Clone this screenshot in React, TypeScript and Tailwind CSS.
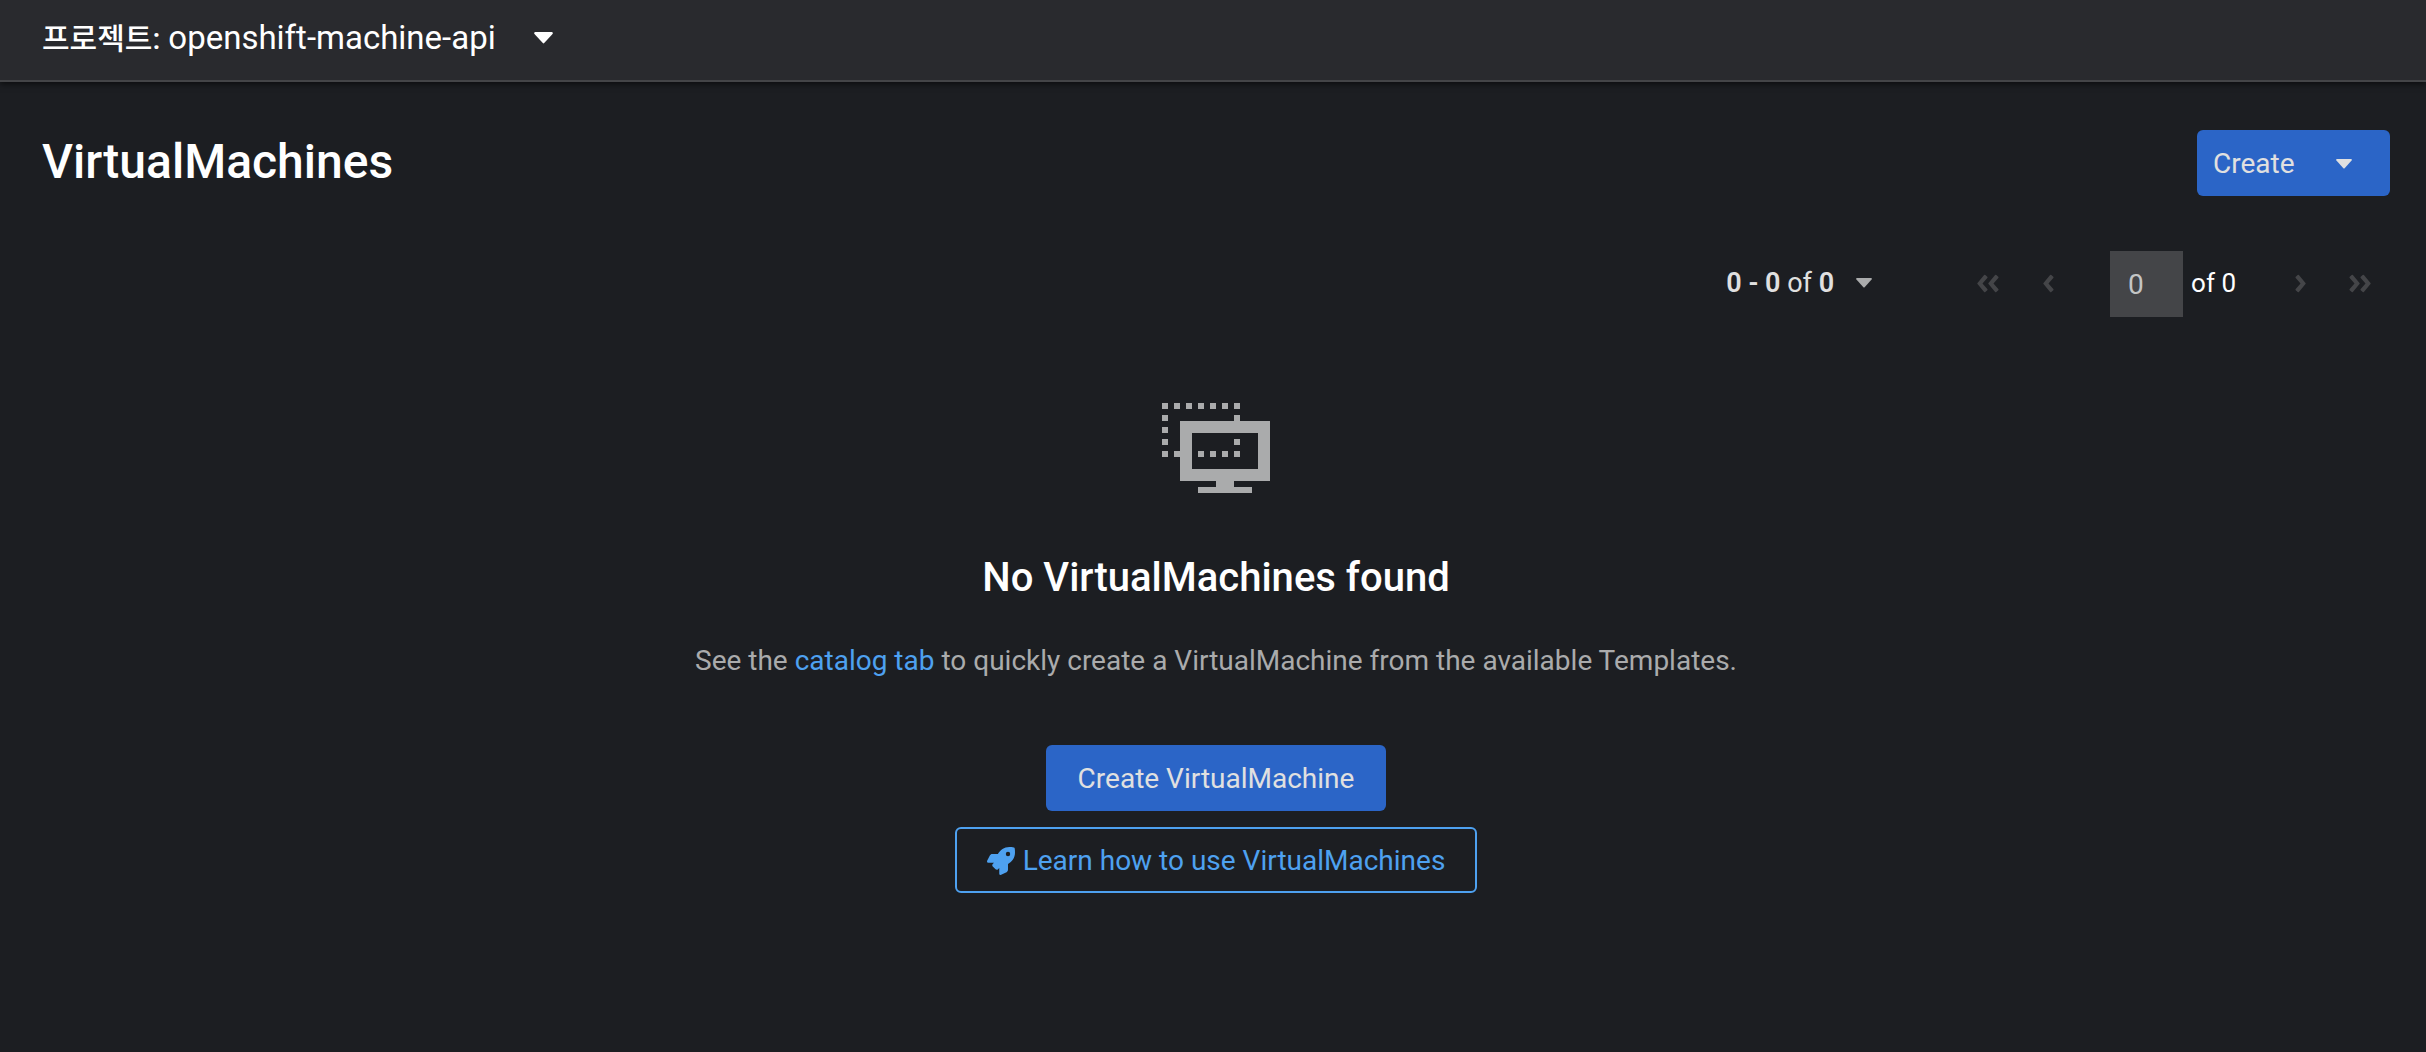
import type { ReactNode } from "react";
import { FaRocket } from "react-icons/fa";

function Caret({ className }: { className: string }) {
  return (
    <svg viewBox="0 0 16 10" fill="currentColor" aria-hidden="true" className={className}>
      <path d="M1 0H15Q16.4 .4 15.6 1.6L8.6 9.3Q8 9.9 7.4 9.3L.4 1.6Q-.4 .4 1 0Z" />
    </svg>
  );
}

const chevron = "M8.3 1 10.3 2.8Q10.9 3.4 10.3 4L5.5 9.5 10.3 15Q10.9 15.6 10.3 16.2L8.3 18Q7.7 18.5 7.1 18L.5 10.1Q0 9.5 .5 8.9L7.1 1Q7.7 .5 8.3 1Z";

function Chevron({ double = false, flip = false }: { double?: boolean; flip?: boolean }) {
  return (
    <svg
      viewBox={double ? "0 0 22 19" : "0 0 11 19"}
      fill="currentColor"
      aria-hidden="true"
      className={`h-[19px] ${double ? "w-[22px]" : "w-[11px]"} ${flip ? "rotate-180" : ""}`}
    >
      <path d={chevron} />
      {double && <path d={chevron} transform="translate(11 0)" />}
    </svg>
  );
}

function NavButton({ label, children }: { label: string; children: ReactNode }) {
  return (
    <button type="button" disabled aria-label={label} className="flex h-16 w-[60px] items-center justify-center pb-0.5 text-[#444548]">
      {children}
    </button>
  );
}

const dots = [
  [0, 0], [12, 0], [24, 0], [36, 0], [48, 0], [60, 0], [72, 0],
  [0, 12], [72, 12], [0, 24], [0, 36], [72, 36],
  [0, 48], [12, 48], [36, 48], [48, 48], [60, 48], [72, 48],
];

function VirtualMachineIcon() {
  return (
    <svg viewBox="0 0 108 90" fill="currentColor" shapeRendering="crispEdges" aria-hidden="true" className="h-[90px] w-[108px] text-[#aaabac]">
      {dots.map(([x, y]) => (
        <rect key={`${x}-${y}`} x={x} y={y} width="6" height="6" />
      ))}
      <path fillRule="evenodd" d="M18 18H108V78H18ZM30 30V66H96V30Z" />
      <path d="M54 78H72V84H90V90H36V84H54Z" />
    </svg>
  );
}

export default function App() {
  return (
    <div className="min-h-screen bg-[#1c1e22] font-[Roboto,'Noto_Sans_CJK_KR',sans-serif] text-[28px] leading-[42px] text-white">
      <header className="relative flex h-[82px] items-center border-b-2 border-[#444548] bg-[#292a2e] px-[42px] pb-1 shadow-[0_2px_6px_rgba(0,0,0,0.6)]">
        <button type="button" className="flex items-center">
          <span className="flex items-baseline gap-2">
            <span className="text-[30px] font-medium">프로젝트:</span>
            <span className="text-[33px]">openshift-machine-api</span>
          </span>
          <Caret className="ml-[38px] h-3 w-[19px]" />
        </button>
      </header>

      <main>
        <div className="flex items-center justify-between pt-12 pr-9 pl-[42px]">
          <h1 className="pb-0.5 text-[48px] leading-[60px] font-medium">VirtualMachines</h1>
          <button type="button" className="flex h-[66px] w-[193px] items-center rounded-md bg-[#2b65c7] pt-0.5 pl-4 text-[#e0e0e0]">
            Create
            <Caret className="ml-[41px] h-[10px] w-4" />
          </button>
        </div>

        <nav aria-label="Pagination" className="mt-[55px] flex h-[66px] items-center justify-end pr-9 text-[26px]">
          <button type="button" className="flex items-center pb-0.5 text-[27px] text-[#e0e0e0]">
            <span>
              <b className="font-semibold">0 - 0</b> of <b className="font-semibold">0</b>
            </span>
            <Caret className="ml-[22px] h-[10px] w-4 text-[#aaabac]" />
          </button>
          <div className="ml-[86px] flex">
            <NavButton label="First page"><Chevron double /></NavButton>
            <NavButton label="Previous page"><Chevron /></NavButton>
          </div>
          <input
            aria-label="Current page"
            defaultValue="0"
            className="ml-8 h-[66px] w-[73px] bg-[#444548] px-[18px] text-[28px] text-[#c4c5c6] outline-none"
          />
          <span className="ml-2 pb-0.5">of 0</span>
          <div className="ml-[34px] flex">
            <NavButton label="Next page"><Chevron flip /></NavButton>
            <NavButton label="Last page"><Chevron double flip /></NavButton>
          </div>
        </nav>

        <section className="mt-[86px] flex flex-col items-center pl-[6px]">
          <VirtualMachineIcon />
          <h2 className="mt-[55px] text-[40px] leading-[60px] font-medium">No VirtualMachines found</h2>
          <p className="mt-8 text-[#aaabac]">
            See the <a href="#catalog" className="text-[#4ea1f0]">catalog tab</a> to quickly create a VirtualMachine from the available Templates.
          </p>
          <button type="button" className="mt-[63px] h-[66px] rounded-md bg-[#2b65c7] px-8 pt-0.5 text-[#e0e0e0]">
            Create VirtualMachine
          </button>
          <button type="button" className="mt-4 flex h-[66px] items-center gap-2 rounded-md border-2 border-[#4ea1f0] px-[30px] pt-0.5 text-[#4ea1f0]">
            <FaRocket aria-hidden="true" className="size-7" />
            Learn how to use VirtualMachines
          </button>
        </section>
      </main>
    </div>
  );
}
